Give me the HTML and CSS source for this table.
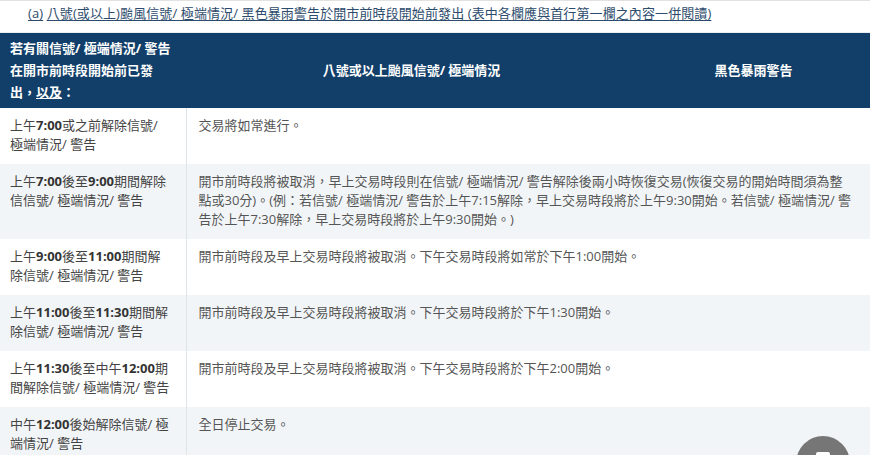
FILE: index.html
```html
<!DOCTYPE html>
<html lang="zh-Hant">
<head>
    <meta charset="UTF-8">
    <meta name="viewport" content="width=device-width, initial-scale=1.0">
    <title>惡劣天氣下的交易安排</title>
    <link rel="stylesheet" href="styles.css">
</head>
<body>
    <div class="page">
        <p class="table-caption"><u>(a)</u> <u>八號(或以上)颱風信號/ 極端情況/ 黑色暴雨警告於開市前時段開始前發出 (表中各欄應與首行第一欄之內容一併閱讀)</u></p>

        <table class="weather-table">
            <colgroup>
                <col class="col-when">
                <col class="col-signal">
                <col class="col-rain">
            </colgroup>
            <thead>
                <tr>
                    <th class="first">若有關信號/ 極端情況/ 警告<br>在開市前時段開始前已發<br>出，<u>以及</u>：</th>
                    <th>八號或以上颱風信號/ 極端情況</th>
                    <th>黑色暴雨警告</th>
                </tr>
            </thead>
            <tbody>
                <tr>
                    <td class="when">上午<b>7:00</b>或之前解除信號/ 極端情況/ 警告</td>
                    <td colspan="2">交易將如常進行。</td>
                </tr>
                <tr>
                    <td class="when">上午<b>7:00</b>後至<b>9:00</b>期間解除信信號/ 極端情況/ 警告</td>
                    <td colspan="2">開市前時段將被取消，早上交易時段則在信號/ 極端情況/ 警告解除後兩小時恢復交易(恢復交易的開始時間須為整點或30分)。(例：若信號/ 極端情況/ 警告於上午7:15解除，早上交易時段將於上午9:30開始。若信號/ 極端情況/ 警告於上午7:30解除，早上交易時段將於上午9:30開始。)</td>
                </tr>
                <tr>
                    <td class="when">上午<b>9:00</b>後至<b>11:00</b>期間解除信號/ 極端情況/ 警告</td>
                    <td colspan="2">開市前時段及早上交易時段將被取消。下午交易時段將如常於下午1:00開始。</td>
                </tr>
                <tr>
                    <td class="when">上午<b>11:00</b>後至<b>11:30</b>期間解除信號/ 極端情況/ 警告</td>
                    <td colspan="2">開市前時段及早上交易時段將被取消。下午交易時段將於下午1:30開始。</td>
                </tr>
                <tr>
                    <td class="when">上午<b>11:30</b>後至中午<b>12:00</b>期間解除信號/ 極端情況/ 警告</td>
                    <td colspan="2">開市前時段及早上交易時段將被取消。下午交易時段將於下午2:00開始。</td>
                </tr>
                <tr>
                    <td class="when">中午<b>12:00</b>後始解除信號/ 極端情況/ 警告</td>
                    <td colspan="2">全日停止交易。</td>
                </tr>
            </tbody>
        </table>
    </div>

    <!-- floating help button -->
    <a class="fab" href="#">
        <svg width="18" height="18" viewBox="0 0 18 18">
            <rect x="2" y="2" width="14" height="14" rx="2" fill="#fff"/>
        </svg>
    </a>
</body>
</html>
```

FILE: styles.css
```css
body {
    margin: 0;
    font-family: 'Open Sans', 'Noto Sans CJK TC', sans-serif;
    font-size: 13px;
    color: #444;
    background: #fff;
}

.page {
    border-top: 1px solid #e2e2e2;
}

.table-caption {
    margin: 0;
    padding: 3px 0 0 28px;
    height: 28px;
    line-height: 18px;
    color: #2d4b6c;
    letter-spacing: 0.1px;
}

.table-caption u {
    text-decoration-thickness: 1px;
    text-underline-offset: 2px;
}

.weather-table {
    width: 100%;
    border-collapse: collapse;
    table-layout: fixed;
    border-top: 1px solid #e8eef4;
}

.col-when {
    width: 186px;
}

.col-signal {
    width: 451px;
}

.weather-table th {
    background: #123f6a;
    color: #fff;
    font-weight: bold;
    line-height: 22px;
    padding: 4px 8px 5px;
    text-align: center;
    vertical-align: middle;
}

.weather-table th.first {
    text-align: left;
    padding-left: 10px;
}

.weather-table td {
    line-height: 19px;
    padding: 8px 18px 10px 12px;
    vertical-align: top;
    color: #555;
}

.weather-table td.when {
    padding-left: 10px;
    padding-right: 16px;
    color: #444;
    border-right: 1px solid #dfe4e9;
}

.weather-table td b {
    color: #333;
}

.weather-table tbody tr:nth-child(even) {
    background: #f2f5f8;
}

.fab {
    position: fixed;
    right: 20px;
    bottom: -35px;
    width: 54px;
    height: 54px;
    border-radius: 50%;
    background: #767676;
    display: flex;
    justify-content: center;
    padding-top: 14px;
    box-sizing: border-box;
}
```
